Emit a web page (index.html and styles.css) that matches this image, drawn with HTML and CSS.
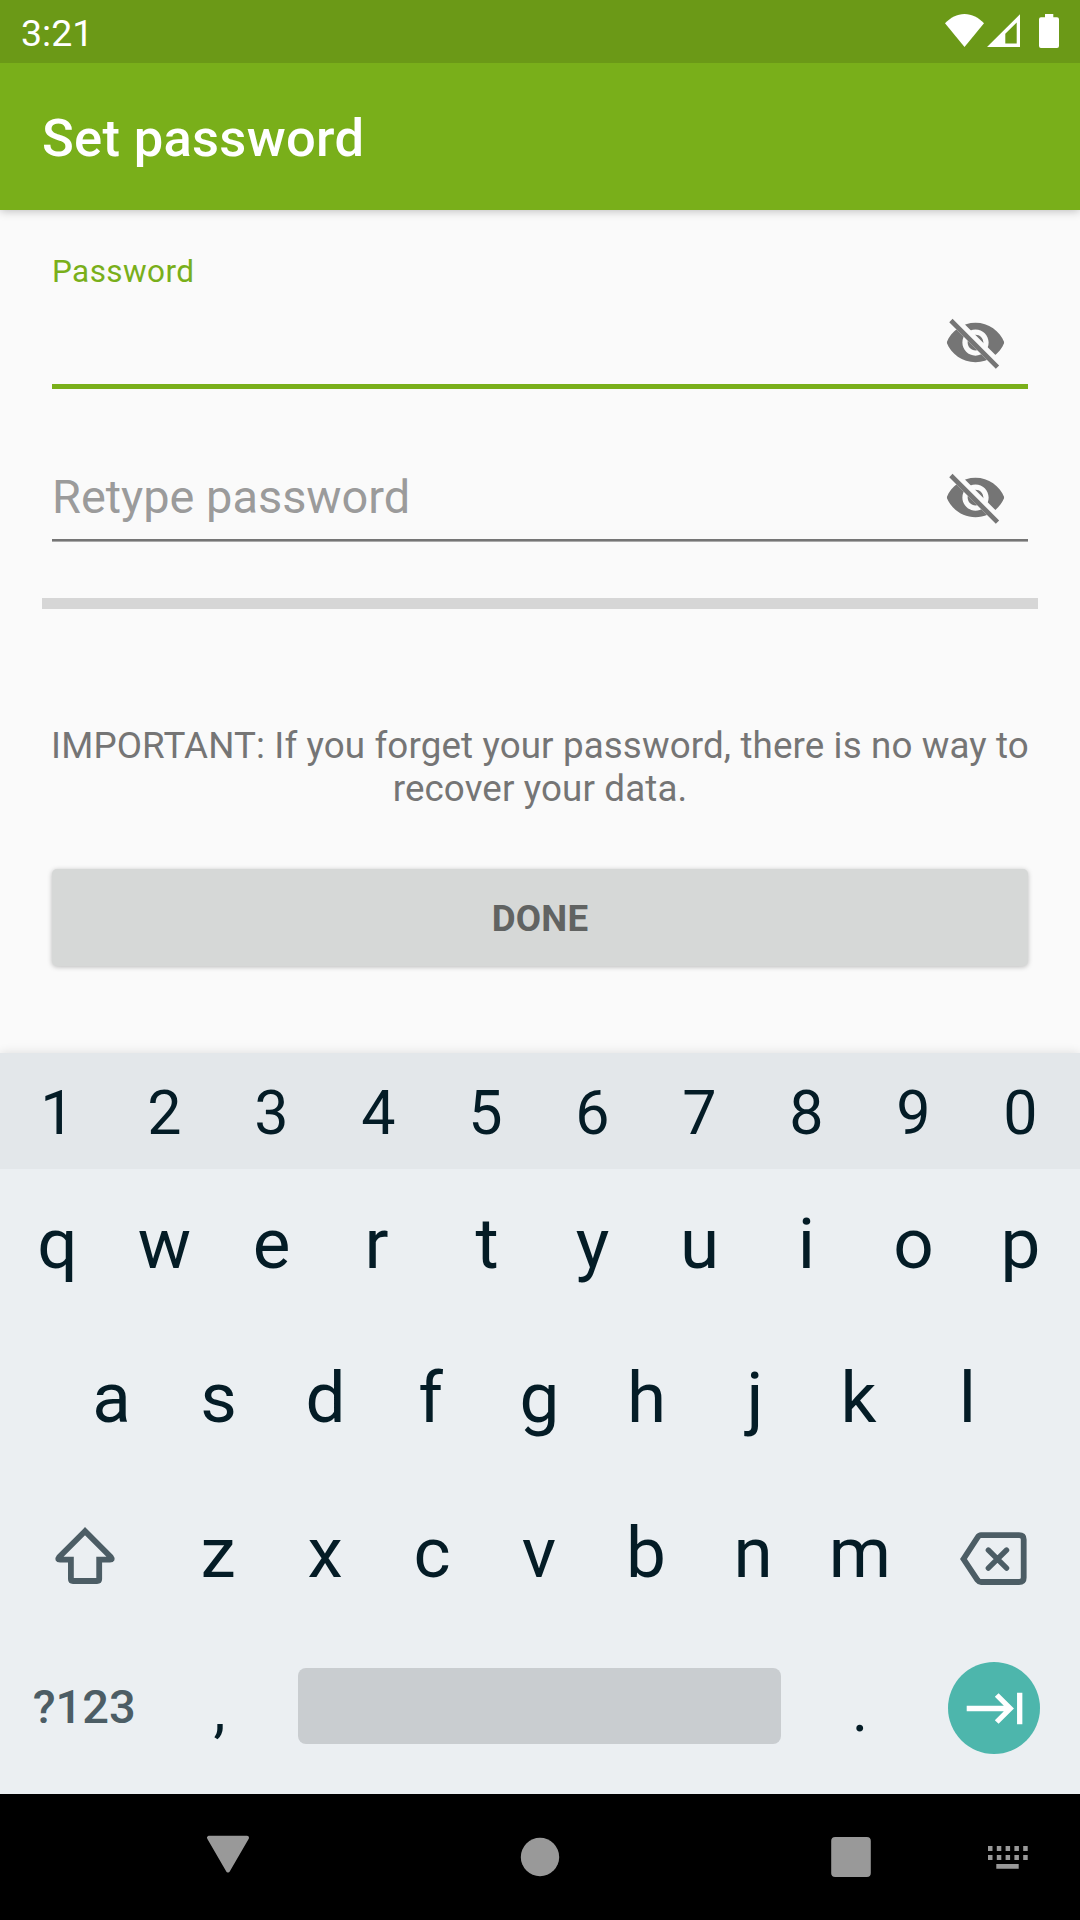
FILE: index.html
```html
<!DOCTYPE html>
<html lang="en">
<head>
<meta charset="utf-8">
<title>Set password</title>
<link rel="stylesheet" href="styles.css">
</head>
<body>
<svg class="defs" width="0" height="0">
  <defs>
    <clipPath id="eye-clip"><path d="M2 4.27 19.73 22 22.27 19.46 4.54 1.73V1H23V23H1V4.27Z"/></clipPath>
    <symbol id="eye-off" viewBox="0 0 24 24">
      <path clip-path="url(#eye-clip)" fill="#757575" d="M12 4.5C7 4.5 2.73 7.61 1 12c1.73 4.39 6 7.5 11 7.5s9.27-3.11 11-7.5c-1.73-4.39-6-7.5-11-7.5zM12 17c-2.76 0-5-2.24-5-5s2.24-5 5-5 5 2.24 5 5-2.24 5-5 5zm0-8c-1.66 0-3 1.34-3 3s1.34 3 3 3 3-1.34 3-3-1.34-3-3-3z"/>
      <path d="M3.27 4.27 19.74 20.74" fill="none" stroke="#757575" stroke-width="1.8" stroke-linecap="square"/>
    </symbol>
  </defs>
</svg>
<div class="screen">
  <header class="status">
    <span class="clock">3:21</span>
    <svg class="status-icons" width="116" height="36" viewBox="944 13 116 36" fill="#fff">
      <path d="M964.5 47 945 23.3C950.500 17.500 957 14 964.500 14S978.500 17.500 984 23.300Z"/>
      <path fill-rule="evenodd" d="M987 47 1020 14.300V47ZM1005.300 33.700V43.500H1016.700V22.500Z"/>
      <path d="M1045 14H1053.300V17.200H1057A2 2 0 0 1 1059 19.200V46A2 2 0 0 1 1057 48H1041A2 2 0 0 1 1039 46V19.200A2 2 0 0 1 1041 17.200H1045Z"/>
    </svg>
  </header>
  <div class="appbar"><h1>Set password</h1></div>

  <main class="form">
    <label class="label">Password</label>
    <div class="field active">
      <span class="hint"></span>
      <svg class="eye"><use href="#eye-off"/></svg>
    </div>
    <div class="field">
      <span class="hint">Retype password</span>
      <svg class="eye"><use href="#eye-off"/></svg>
    </div>
    <div class="strength"></div>
    <p class="note">IMPORTANT: If you forget your password, there is no way to recover your data.</p>
    <button class="done">DONE</button>
  </main>

  <section class="keyboard">
    <div class="row digits"><span>1</span><span>2</span><span>3</span><span>4</span><span>5</span><span>6</span><span>7</span><span>8</span><span>9</span><span>0</span></div>
    <div class="row top"><span>q</span><span>w</span><span>e</span><span class="left">r</span><span class="right">t</span><span>y</span><span>u</span><span>i</span><span>o</span><span>p</span></div>
    <div class="row home"><span>a</span><span>s</span><span>d</span><span class="left">f</span><span>g</span><span>h</span><span class="right">j</span><span class="left">k</span><span>l</span></div>
    <div class="row lower">
      <span class="wide"><svg class="shift" width="64" height="64" viewBox="53 1525 64 64" fill="none" stroke="#4c5d65" stroke-width="5.8"><path stroke-miterlimit="10" d="M85 1531.200 59 1557.300Q57 1559.700 60 1559.700H70.900V1579Q70.900 1581 73 1581H97Q99.200 1581 99.200 1579V1559.700H110Q113 1559.700 111 1557.300Z"/></svg></span>
      <span>z</span><span>x</span><span>c</span><span>v</span><span>b</span><span>n</span><span>m</span>
      <span class="wide"><svg class="erase" width="70" height="60" viewBox="959 1529 70 60" fill="none" stroke="#4c5d65" stroke-width="5.800"><path d="M963.500 1559 977.500 1537.500Q979 1535.200 981 1535.200H1019Q1023.700 1535.200 1023.700 1539.500V1577.700Q1023.700 1582 1019 1582H981Q979 1582 977.500 1580Z"/><path stroke-width="5.300" stroke-linecap="round" d="M988.300 1550 1006.600 1568.200M1006.600 1550 988.300 1568.200"/></svg></span>
    </div>
    <div class="row bottom">
      <span class="wide mode">?123</span>
      <span class="punct comma">,</span>
      <span class="space"><i></i></span>
      <span class="punct">.</span>
      <span class="wide"><svg class="next" width="92" height="92" viewBox="948 1662 92 92" fill="none"><circle cx="994" cy="1708" r="46" fill="#4db6ac"/><path stroke="#fff" stroke-width="5.300" d="M966.700 1708.500H1010M996.700 1695 1010.200 1708.500 996.700 1722M1019.700 1692.700V1724.300"/></svg></span>
    </div>
  </section>

  <nav class="navbar">
    <svg width="1080" height="126" viewBox="0 1794 1080 126" fill="#999">
      <path stroke="#999" stroke-width="4" stroke-linejoin="round" d="M209 1837.800H247L228 1870.500Z"/>
      <circle cx="540" cy="1857" r="19.200"/>
      <rect x="831.200" y="1837" width="39.600" height="40" rx="4"/>
      <path d="M988 1846h4.500v5H988zM996.800 1846h4.500v5h-4.500zM1005.600 1846h4.500v5h-4.500zM1014.400 1846h4.500v5h-4.500zM1023.200 1846h4.500v5h-4.500zM988 1855h4.500v5H988zM996.800 1855h4.500v5h-4.500zM1005.600 1855h4.500v5h-4.500zM1014.400 1855h4.500v5h-4.500zM1023.200 1855h4.500v5h-4.500zM996.300 1864H1018.700v4.700H996.300z"/>
    </svg>
  </nav>
</div>
</body>
</html>
```
FILE: styles.css
```css
* { box-sizing: border-box; }
body { margin: 0; font-family: Roboto, sans-serif; background: #fafafa; }
.defs { display: block; }
svg { display: block; }
.screen { width: 1080px; height: 1920px; display: flex; flex-direction: column; overflow: hidden; }

.status { position: relative; z-index: 1; height: 63px; flex: none; background: #6b9917; display: flex; align-items: center; justify-content: space-between; padding: 0 20px 0 21px; }
.clock { color: #fff; font-size: 37.5px; line-height: 44px; padding-top: 2px; }
.status-icons { margin-bottom: 1px; }
.appbar { height: 147px; flex: none; background: #79af1a; padding: 0 42px; display: flex; align-items: center; box-shadow: 0 1px 9px rgba(0, 0, 0, .25); }
.appbar h1 { margin: 0; padding-top: 3px; color: #fff; font-size: 52.5px; font-weight: 500; line-height: 62px; letter-spacing: .3px; }

.form { height: 843px; flex: none; padding: 44px 42px 0; display: flex; flex-direction: column; }
.label { margin-left: 10px; color: #79af1a; font-size: 31.5px; line-height: 36px; letter-spacing: .42px; }
.field { margin: 67px 10px 0; height: 85px; padding-right: 20.700px; display: flex; align-items: center; justify-content: space-between; border-bottom: 2px solid #757575; box-shadow: 0 1px #aaa; }
.field.active { margin-top: 11px; height: 88px; border-bottom: 5px solid #79af1a; box-shadow: none; }
.hint { color: #9b9b9b; font-size: 46.9px; line-height: 56px; padding-bottom: 2px; }
.eye { width: 63px; height: 63px; }
.strength { margin-top: 57px; height: 11px; background: #d6d6d6; }
.note { margin: 115px 0 0; color: #757575; font-size: 36.75px; line-height: 43px; letter-spacing: .12px; text-align: center; }
.done { margin: 59px 10px 0; height: 97px; padding: 2px 0 0; border: 0; border-radius: 5px; background: #d6d8d7; color: #616362; font: 700 36.75px/43px Roboto, sans-serif; letter-spacing: .15px; box-shadow: 0 1px 5px rgba(0, 0, 0, .26); }

.keyboard { height: 741px; flex: none; background: #ebeff2; color: #041c26; box-shadow: 0 0 10px rgba(0, 0, 0, .12); }
.row { display: flex; padding: 0 5px 0 4px; font-size: 71px; }
.row span { width: 107px; flex: none; display: flex; align-items: center; justify-content: center; }
.row .left { padding-right: 4px; }
.row .right { padding-left: 3px; }
.row .wide { width: 160.500px; }
.digits { height: 116px; background: #e3e7ea; font-size: 61px; padding-top: 4px; }
.top { height: 152px; padding-bottom: 4px; }
.home { height: 155px; padding-left: 58px; padding-bottom: 2px; }
.lower { height: 154px; padding-bottom: 2px; }
.bottom { height: 155px; }
.row .mode { color: #4c5d65; font-size: 47px; font-weight: 500; padding-bottom: 2px; }
.row .punct { font-size: 61px; padding-top: 5px; }
.row .comma { padding-left: 3px; }
.row .space { width: 535px; padding-bottom: 3px; }
.space i { width: 483px; height: 76px; border-radius: 8px; background: #c9cdd0; }
.shift { margin: 10px 0 0 1px; }
.erase { margin-top: 14px; }

.navbar { height: 126px; flex: none; background: #000; }
```
